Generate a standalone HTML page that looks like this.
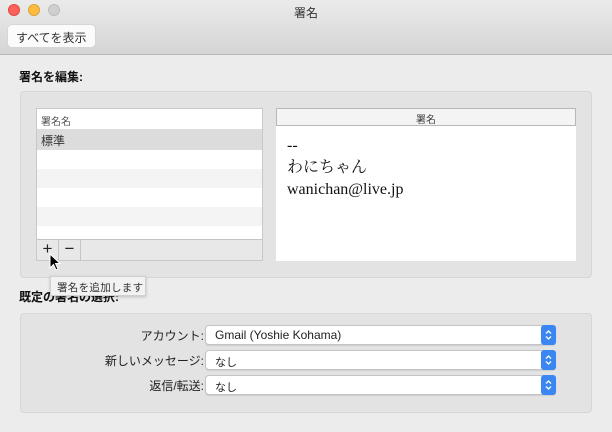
<!DOCTYPE html>
<html><head><meta charset="utf-8"><style>
*{margin:0;padding:0;box-sizing:border-box}
body{width:612px;height:432px;background:#ececec;font-family:"Liberation Sans","Noto Sans CJK JP",sans-serif;position:relative;overflow:hidden;font-size:12px;color:#222}
.a{position:absolute;white-space:nowrap}
.tb{left:0;top:0;width:612px;height:55px;background:linear-gradient(#ebebeb,#d5d5d5);border-bottom:1px solid #b8b8b8}
.dot{width:12px;height:12px;border-radius:50%;top:4px}
.grp{background:#e3e3e3;border:1px solid #d6d6d6;border-radius:4px}
.sel{left:205px;width:351px;height:20px;background:#fff;border:1px solid #c4c4c4;border-radius:4px;font-size:11px;padding:3px 0 0 9px;box-shadow:0 1px 1px rgba(0,0,0,.1)}
.sel svg{position:absolute;right:-1px;top:-1px}
.lbl{right:408px;font-size:12px;text-align:right}
</style></head><body>
<div class="a tb"></div>
<div class="a dot" style="left:8px;background:#fc605c;border:1px solid #de4a43"></div>
<div class="a dot" style="left:28px;background:#fdbc40;border:1px solid #dea236"></div>
<div class="a dot" style="left:48px;background:#cfcfcf;border:1px solid #bcbcbc"></div>
<div class="a" style="left:0;width:612px;top:4px;text-align:center;font-size:12px;color:#333">署名</div>
<div class="a" style="left:8px;top:25px;width:87px;height:22px;background:#fbfbfb;border-radius:4px;box-shadow:0 0 0 1px #d6d6d6;font-size:12px;padding:4px 0 0 8px;color:#333">すべてを表示</div>
<div class="a" style="left:19px;top:68px;font-weight:bold;font-size:12px;color:#111">署名を編集:</div>
<div class="a grp" style="left:20px;top:91px;width:572px;height:187px"></div>
<div class="a" style="left:36px;top:108px;width:227px;height:153px;background:#fff;border:1px solid #c8c8c8"></div>
<div class="a" style="left:37px;top:109px;width:225px;height:21px;border-bottom:1px solid #ddd;font-size:10px;padding:4px 0 0 4px;color:#555">署名名</div>
<div class="a" style="left:37px;top:130px;width:225px;height:20px;background:#dcdcdc;font-size:12px;padding:2px 0 0 4px;color:#333">標準</div>
<div class="a" style="left:37px;top:169px;width:225px;height:19px;background:#f4f4f4"></div>
<div class="a" style="left:37px;top:207px;width:225px;height:19px;background:#f4f4f4"></div>
<div class="a" style="left:37px;top:239px;width:225px;height:21px;background:#e8e8e8;border-top:1px solid #c4c4c4"></div>
<div class="a" style="left:37px;top:239px;width:22px;height:21px;border-right:1px solid #c4c4c4;text-align:center;font-size:17px;line-height:20px">+</div>
<div class="a" style="left:59px;top:239px;width:22px;height:21px;border-right:1px solid #c4c4c4;text-align:center;font-size:17px;line-height:20px">−</div>
<svg class="a" style="left:49px;top:253px" width="14" height="20" viewBox="0 0 14 20"><path d="M1 1 L1 15 L4.5 11.5 L7 17 L9 16 L6.5 10.5 L11 10.5 Z" fill="#000" stroke="#fff" stroke-width="1"/></svg>
<div class="a" style="left:276px;top:108px;width:300px;height:153px;background:#fff"></div>
<div class="a" style="left:276px;top:108px;width:300px;height:18px;background:#f4f4f4;border:1px solid #b8b8b8;text-align:center;font-size:10px;padding-top:2px;color:#444">署名</div>
<div class="a" style="left:287px;top:135px;font-family:'Liberation Serif','Noto Serif CJK SC',serif;font-size:16px;line-height:22px;color:#111">--<br>わにちゃん<br>wanichan@live.jp</div>
<div class="a" style="left:19px;top:288px;font-weight:bold;font-size:12px;color:#111">既定の署名の選択:</div>
<div class="a" style="left:50px;top:276px;width:96px;height:20px;background:#f2f2f2;border:1px solid #d0d0d0;box-shadow:0 1px 3px rgba(0,0,0,.2);font-size:10.5px;padding:3px 0 0 6px;color:#333;letter-spacing:0.3px">署名を追加します</div>
<div class="a grp" style="left:20px;top:313px;width:572px;height:100px"></div>
<div class="a lbl" style="top:327px">アカウント:</div>
<div class="a lbl" style="top:352px">新しいメッセージ:</div>
<div class="a lbl" style="top:377px">返信/転送:</div>
<div class="a sel" style="top:325px;font-size:12px;padding-top:2px">Gmail (Yoshie Kohama)<svg width="15" height="20" viewBox="0 0 15 20"><rect width="15" height="20" rx="3" fill="#3b87f2"/><path d="M5 8.5 L7.5 6 L10 8.5 M5 11.5 L7.5 14 L10 11.5" fill="none" stroke="#fff" stroke-width="1.3"/></svg></div>
<div class="a sel" style="top:350px">なし<svg width="15" height="20" viewBox="0 0 15 20"><rect width="15" height="20" rx="3" fill="#3b87f2"/><path d="M5 8.5 L7.5 6 L10 8.5 M5 11.5 L7.5 14 L10 11.5" fill="none" stroke="#fff" stroke-width="1.3"/></svg></div>
<div class="a sel" style="top:375px">なし<svg width="15" height="20" viewBox="0 0 15 20"><rect width="15" height="20" rx="3" fill="#3b87f2"/><path d="M5 8.5 L7.5 6 L10 8.5 M5 11.5 L7.5 14 L10 11.5" fill="none" stroke="#fff" stroke-width="1.3"/></svg></div>
</body></html>
